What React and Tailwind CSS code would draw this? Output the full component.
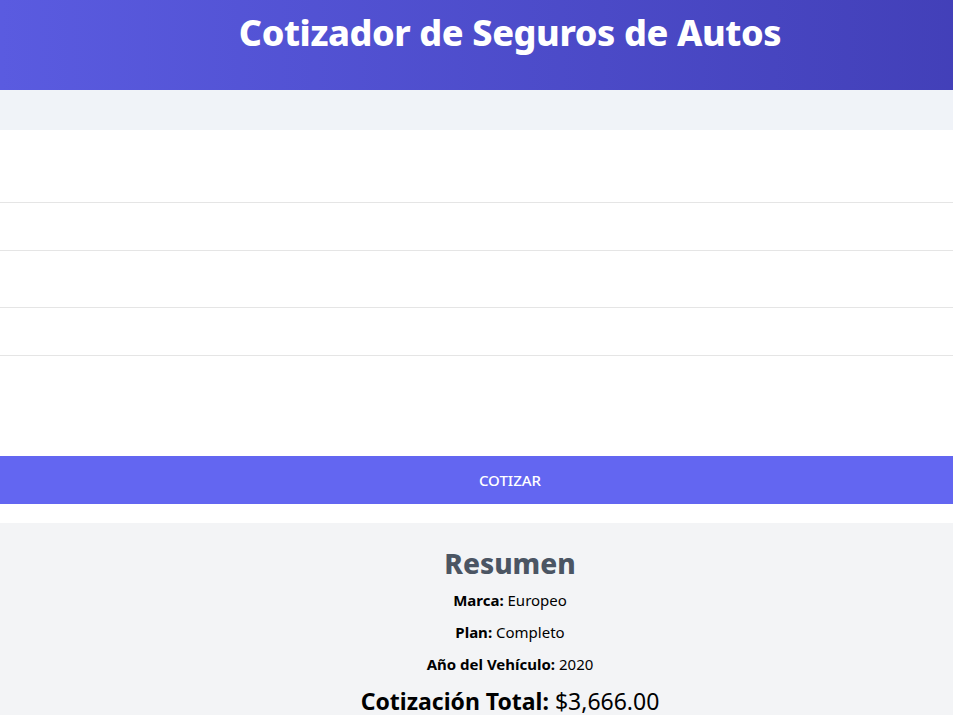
export default function App() {
  const resumen = [
    { label: 'Marca', value: 'Europeo' },
    { label: 'Plan', value: 'Completo' },
    { label: 'Año del Vehículo', value: '2020' },
  ];

  return (
    <div className="w-[953px] h-[715px] overflow-hidden bg-white" style={{ fontFamily: '"Noto Sans", "Open Sans", sans-serif' }}>
      <div className="w-[1020px]">
        {/* encabezado */}
        <header className="h-[90px] bg-gradient-to-r from-[#5a5be0] to-[#413eb6] flex justify-center pt-[11px]">
          <h1 className="text-[36px] leading-[44px] font-extrabold text-white tracking-[-0.4px]">Cotizador de Seguros de Autos</h1>
        </header>

        <div className="h-[40px] bg-[#f0f3f8]" />

        {/* formulario */}
        <form className="bg-white">
          <div className="h-[73px] border-b border-[#e5e5e5]" />
          <div className="h-[48px] border-b border-[#e5e5e5]" />
          <div className="h-[57px] border-b border-[#e5e5e5]" />
          <div className="h-[48px] border-b border-[#e5e5e5]" />
          <div className="h-[100px]" />
          <button type="button" className="w-full h-[48px] bg-[#6366f1] text-white text-[15px] font-medium uppercase">
            Cotizar
          </button>
          <div className="h-[19px]" />
        </form>

        {/* resumen */}
        <section className="bg-[#f3f4f6] pt-[20px] pb-6 flex flex-col items-center text-black">
          <h2 className="text-[28px] leading-[40px] font-extrabold text-[#4b5563]">Resumen</h2>
          {resumen.map((r, i) => (
            <p key={r.label} className={`text-[15px] leading-[21px] ${i === 0 ? 'mt-[7px]' : 'mt-[11px]'}`}>
              <span className="font-bold">{r.label}:</span> {r.value}
            </p>
          ))}
          <p className="text-[23px] leading-[30px] mt-[11px]">
            <span className="font-bold">Cotización Total:</span> $3,666.00
          </p>
        </section>
      </div>
    </div>
  );
}
